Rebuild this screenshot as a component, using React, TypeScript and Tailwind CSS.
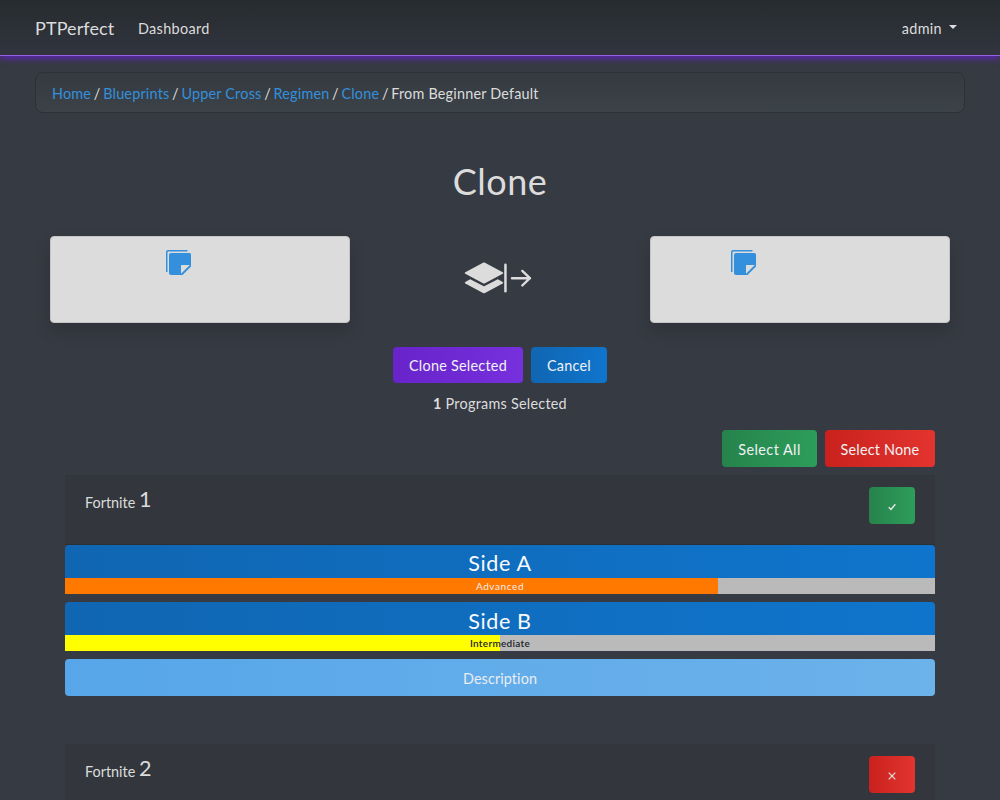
import React from "react";

function Stickies() {
  return (
    <svg viewBox="0 0 25 25" className="h-[25px] w-[25px]" fill="#3490dc">
      <path d="M0 22V2Q0 0 2 0h19.5v1.5H2.3q-.8 0-.8.8V22z" />
      <path fillRule="evenodd" d="M5 3h18.500q1.500 0 1.500 1.500v12L16.500 25H5q-2 0-2-2V5q0-2 2-2zM15 15.500v8.300L23.800 15H15.500q-.5 0-.5.5z" />
    </svg>
  );
}

function LayersToRight() {
  return (
    <svg viewBox="0 0 68 32" className="h-8 w-[68px]" fill="#dcdcdc">
      <path d="M19.500.6Q20 .3 20.500.6L38.700 10.300Q40 11 38.700 11.700L20.500 21.400Q20 21.700 19.500 21.400L1.300 11.700Q0 11 1.300 10.300z" />
      <path d="M6.200 17.200 19.300 24.100Q20 24.500 20.700 24.100L33.800 17.200 38.700 20Q39.800 20.700 38.700 21.400L20.500 31.200Q20 31.500 19.500 31.200L1.300 21.400Q.2 20.700 1.300 20z" />
      <rect x="40.200" y="1.500" width="2.500" height="29" rx="1.200" />
      <path d="M48 16.200h18M58.300 8.900l7.600 7.300-7.600 7.300" fill="none" stroke="#dcdcdc" strokeWidth="2.400" strokeLinecap="round" strokeLinejoin="round" />
    </svg>
  );
}

function Side({ name, level, nameClass, fill, labelClass }: { name: string; level: string; nameClass: string; fill: number; labelClass: string }) {
  const color = level === "Advanced" ? "bg-[#ff7800]" : "bg-[#ffff00]";
  return (
    <div className="mb-2">
      <div className={`h-[33px] rounded-t-[4px] bg-linear-to-r from-[#1066b2] to-[#0f75cc] text-center text-[21.6px] tracking-[0.6px] text-[#f8fafc] ${nameClass}`}>
        {name}
      </div>
      <div className="relative h-4 bg-[#bababa]">
        <div className={`h-4 ${color}`} style={{ width: `${fill}%` }} />
        <div className={`absolute inset-0 text-center text-[10px] leading-[17px] ${labelClass}`}>{level}</div>
      </div>
    </div>
  );
}

function ProgramHeader({ index, selected }: { index: number; selected: boolean }) {
  return (
    <div className="flex h-[70px] items-start justify-between border-b border-[#2c3033] bg-[#33373d] px-5 pt-3">
      <div className="flex leading-[24px]">
        <span className="w-[54px] pt-1">Fortnite</span>
        <span className="text-[21.6px]">{index}</span>
      </div>
      <button
        className={`flex h-[37px] w-[46px] items-center justify-center rounded-[4px] bg-linear-to-r pt-[3px] ${
          selected ? "from-[#26834b] to-[#2d9d5b]" : "from-[#c9211d] to-[#e3342f]"
        }`}
      >
        <svg viewBox="0 0 8 8" className="h-2 w-2" fill="none" stroke="#e8e8e8" strokeWidth="1.4">
          {selected ? <path d="M.8 4.200 3 6.500 7.300 1.300" /> : <path d="M.7.7l6.600 6.600M7.300.7.7 7.300" strokeWidth="1.1" />}
        </svg>
      </button>
    </div>
  );
}

const crumbs = ["Home", "Blueprints", "Upper Cross", "Regimen", "Clone"];

export default function App() {
  return (
    <div className="h-[800px] w-full overflow-hidden bg-[#363a42] font-['Lato',sans-serif] text-[14.4px] text-[#dcdcdc]">
      <nav className="flex h-14 items-center border-b border-[#9561e2] bg-linear-to-b from-[#272c2f] to-[#31343e] px-[35px] pt-px shadow-[0_2px_7px_#6320c4]">
        <span className="w-[103px] text-[18px] tracking-[0.1px]">PTPerfect</span>
        <span className="pt-px tracking-[0.35px]">Dashboard</span>
        <span className="ml-auto mr-2 flex items-center pt-[2px] tracking-[0.35px]">
          admin
          <svg viewBox="0 0 8 4" className="mb-[3px] ml-[7px] h-1 w-2" fill="#dcdcdc"><path d="M0 0h8L4 4z" /></svg>
        </span>
      </nav>

      <div className="mx-[35px] mt-4 flex h-[41px] rounded-lg border border-[#2d3135] bg-linear-to-b from-[#353a41] to-[#3b4248] px-4 leading-[41px] tracking-[0.2px]">
        {crumbs.map((c) => (
          <React.Fragment key={c}>
            <a className="text-[#3490dc]">{c}</a>
            <span className="w-3 text-center">/</span>
          </React.Fragment>
        ))}
        <span>From Beginner Default</span>
      </div>

      <h1 className="mt-[46px] text-center text-[36px] leading-[44px] tracking-[0.5px]">Clone</h1>

      <div className="mx-[50px] mt-[33px] flex justify-between">
        <div className="h-[87px] w-[300px] rounded-[4px] border border-[#c5c5c6] bg-[#dcdcdc] pl-[115px] pt-[13px] shadow-[0_8px_16px_rgba(0,0,0,0.15)]">
          <Stickies />
        </div>
        <div className="w-[72px] pt-[26px]"><LayersToRight /></div>
        <div className="h-[87px] w-[300px] rounded-[4px] border border-[#c5c5c6] bg-[#dcdcdc] pl-20 pt-[13px] shadow-[0_8px_16px_rgba(0,0,0,0.15)]">
          <Stickies />
        </div>
      </div>

      <div className="mt-6 flex justify-center gap-2 text-[#f0f2f4]">
        <button className="h-9 w-[130px] rounded-[4px] bg-linear-to-r from-[#6823ca] to-[#7630dd] pt-px tracking-[0.25px]">Clone Selected</button>
        <button className="h-9 w-[76px] rounded-[4px] bg-linear-to-r from-[#1066b2] to-[#0f75cc] pt-px tracking-[0.25px]">Cancel</button>
      </div>
      <p className="mt-[9px] text-center leading-[23px] tracking-[0.25px]"><span className="font-bold">1</span> Programs Selected</p>

      <div className="mx-[65px] mt-[15px] flex justify-end gap-2 text-[#f0f2f4]">
        <button className="h-[37px] w-[95px] rounded-[4px] bg-linear-to-r from-[#26834b] to-[#2d9d5b] pt-[2px] tracking-[0.45px]">Select All</button>
        <button className="h-[37px] w-[110px] rounded-[4px] bg-linear-to-r from-[#c9211d] to-[#e3342f] pt-[2px] tracking-[0.2px]">Select None</button>
      </div>

      <div className="mx-[65px] mt-2">
        <ProgramHeader index={1} selected />
        <Side name="Side A" level="Advanced" nameClass="leading-[36px]" fill={75} labelClass="tracking-[0.6px] text-[#eeeeee]" />
        <Side name="Side B" level="Intermediate" nameClass="leading-[38px]" fill={50} labelClass="font-semibold tracking-[0.3px] text-[#212529]" />
        <div className="h-[37px] rounded-[4px] bg-linear-to-r from-[#57a6e9] to-[#6cb2eb] text-center leading-[39px] tracking-[0.1px] text-[#e9edf2]">Description</div>
        <div className="mt-12">
          <ProgramHeader index={2} selected={false} />
        </div>
      </div>
    </div>
  );
}
